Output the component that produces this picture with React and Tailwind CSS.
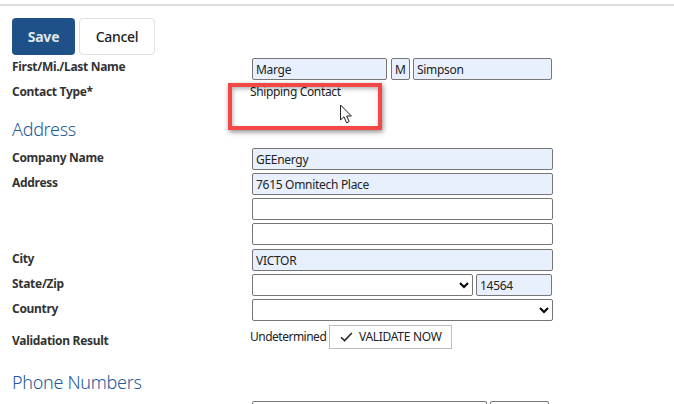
function Row({ label, labelClass = 'pt-[2px]', className = '', children }) {
  return (
    <div className={`flex ${className}`}>
      <label className={`w-[240px] shrink-0 text-[12px] leading-[16px] font-bold tracking-[-0.3px] text-[#333] ${labelClass}`}>{label}</label>
      <div className="flex w-[301px] gap-[3px]">{children}</div>
    </div>
  );
}

function Field({ value = '', filled = true, className = 'w-full' }) {
  return (
    <input
      readOnly
      value={value}
      className={`h-[22px] rounded-[2px] border border-[#767676] px-[3px] text-[12px] tracking-[-0.3px] text-[#222] outline-none ${filled ? 'bg-[#e8f0fe]' : 'bg-white'} ${className}`}
    />
  );
}

function Select({ className = 'w-full' }) {
  return (
    <select className={`h-[22px] rounded-[2px] border border-[#767676] bg-white text-[12px] ${className}`}>
      <option value=""></option>
    </select>
  );
}

export default function App() {
  return (
    <div className="relative h-[404px] w-[674px] overflow-hidden bg-white font-['Noto_Sans',sans-serif]">
      <div className="mt-[4px] h-[2px] bg-[#dcdcdc]" />
      <div className="px-3">
        <div className="mt-3 flex gap-[4px]">
          <button className="h-[37px] w-[63px] rounded-[4px] bg-[#1f5189] text-[14px] font-bold tracking-[-0.2px] text-[#dfe6ef]">Save</button>
          <button className="h-[37px] w-[76px] rounded-[4px] border border-[#e0e0e0] bg-white text-[14px] font-medium tracking-[-0.3px] text-[#222]">Cancel</button>
        </div>

        <Row label="First/Mi./Last Name" className="mt-[3px]" labelClass="pt-[1px]">
          <Field value="Marge" className="w-[135px]" />
          <Field value="M" className="ml-[1px] w-[19px]" />
          <Field value="Simpson" className="w-[139px]" />
        </Row>
        <Row label="Contact Type*" className="mt-[3px]" labelClass="pt-[1px]">
          <span className="-ml-[2px] pt-[1px] text-[12px] leading-[16px] tracking-[-0.35px] text-[#222]">Shipping Contact</span>
        </Row>

        <h2 className="mt-[17px] text-[18px] leading-[24px] font-light tracking-[-0.3px] text-[#1f5c99]">Address</h2>

        <div className="mt-[7px] flex flex-col gap-[3px]">
          <Row label="Company Name"><Field value="GEEnergy" /></Row>
          <Row label="Address"><Field value="7615 Omnitech Place" /></Row>
          <Row label=""><Field filled={false} /></Row>
          <Row label=""><Field filled={false} /></Row>
          <Row label="City" className="mt-[1px]"><Field value="VICTOR" /></Row>
          <Row label="State/Zip">
            <Select className="w-[221px]" />
            <Field value="14564" className="w-[76px]" />
          </Row>
          <Row label="Country"><Select /></Row>
        </div>

        <Row label="Validation Result" className="mt-[3px]" labelClass="pt-[9px]">
          <div className="-ml-[2px] flex items-center gap-[3px]">
            <span className="text-[12px] tracking-[-0.5px] text-[#222]">Undetermined</span>
            <button className="flex h-[24px] w-[123px] items-center justify-center gap-[6px] border border-[#bdbdbd] bg-white text-[12px] tracking-[-0.3px] text-[#222]">
              <svg width="13" height="10" viewBox="0 0 13 10" fill="none" stroke="#222" strokeWidth="1.5">
                <path d="M1 5.2 4.6 8.6 11.8 1" />
              </svg>
              VALIDATE NOW
            </button>
          </div>
        </Row>

        <h2 className="mt-[21px] text-[18px] leading-[24px] font-light tracking-[-0.3px] text-[#1f5c99]">Phone Numbers</h2>

        <div className="ml-[240px] mt-[7px] flex gap-[3px]">
          <Field filled={false} className="w-[235px]" />
          <Field filled={false} className="w-[59px]" />
        </div>
      </div>

      {/* annotation drawn over the capture */}
      <div className="absolute left-[228px] top-[83px] h-[47px] w-[154px] border-[4px] border-[#f44848] shadow-[1px_2px_5px_rgba(0,0,0,0.45),inset_1px_2px_4px_rgba(0,0,0,0.3)]" />
      <svg className="absolute left-[339px] top-[104px]" width="15" height="21" viewBox="0 0 15 21" fill="white" stroke="#222" strokeWidth="1">
        <path d="M1.5 1 1.5 16 5 12.8 7.6 18.8 10.2 17.6 7.7 12 12.4 12Z" />
      </svg>
    </div>
  );
}
